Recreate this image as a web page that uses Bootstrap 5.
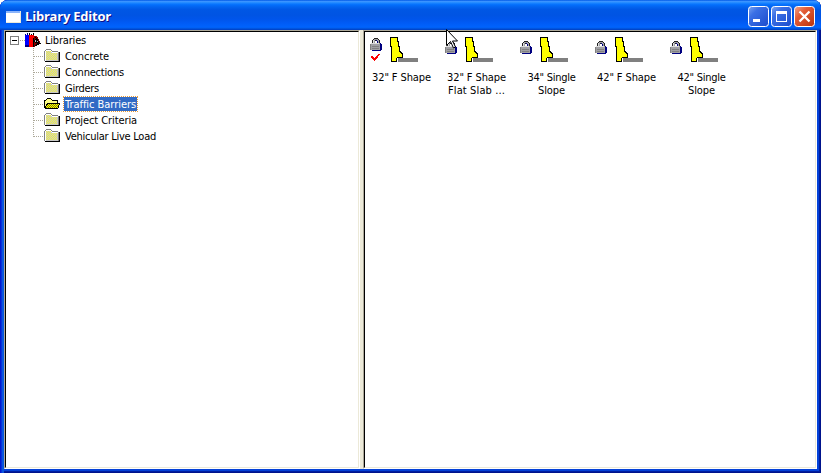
<!DOCTYPE html>
<html lang="en">
<head>
<meta charset="utf-8">
<meta name="viewport" content="width=device-width, initial-scale=1">
<title>Library Editor</title>
<link href="https://cdn.jsdelivr.net/npm/bootstrap@5.3.0/dist/css/bootstrap.min.css" rel="stylesheet">
<style>
body{font:11px/13px "DejaVu Sans Condensed","DejaVu Sans",sans-serif;font-stretch:condensed;color:#000;background:#fff;overflow:hidden}
svg{display:block;flex:none;shape-rendering:crispEdges}
.win{width:821px;height:473px;padding:0 4px 4px;border-radius:8px 8px 0 0;background:#0831d9;
 box-shadow:inset 1px 0 #0019cf,inset 2px 0 #0831d9,inset 4px 0 #0855dd,inset -1px -1px #00138c,inset -2px -2px #001ea0,inset -4px -4px #0441d8}
.titlebar{height:30px;margin:0 -4px;padding:3px 6px 0 6px;border-radius:8px 8px 0 0;
 background:linear-gradient(#0058e6 0,#3a93ff 5%,#288eff 8%,#127dff 12%,#036ffc 16%,#0262ee 24%,#0057e5 32%,#0054e3 50%,#0055eb 64%,#005bf5 76%,#0062fc 88%,#0061f5 92%,#0050d8 96%,#003dc0 100%)}
.caption-text{font:bold 13px/18px "Open Sans","Noto Sans",sans-serif;color:#fff;text-shadow:1px 1px #0f1089;margin:0 auto 0 4px}
.buttons{gap:2px;padding-top:3px}
.panes{height:439px;background:#ece9d8}
.pane{border:solid;border-width:1px;border-color:#aca899 #fff #fff #aca899;background:#fff}
.inner{border:solid;border-width:1px;border-color:#000 #ece9d8 #ece9d8 #000;height:100%;background:#fff}
.tree-pane{width:356px}
.item-pane{width:454px}
.tree-row{height:16px}
.tree-label{height:14px;line-height:13px;padding:1px 1px 0;margin-top:1px;margin-left:4px;white-space:pre}
.root-label{margin-left:0}
.child-row{padding-left:27px}
.dots{width:11px;height:16px;background:repeating-linear-gradient(90deg,#aca899 0 1px,#fff 1px 2px) 1px 8px/10px 1px no-repeat,repeating-linear-gradient(#aca899 0 1px,#fff 1px 2px) 0 0/1px 16px no-repeat}
.child-row:last-child .dots{background-size:10px 1px,1px 9px}
.chosen{background:#316ac5;color:#fff;outline:1px dotted #e79b3a}
.item{width:75px;height:70px}
.item-label{white-space:pre;padding:8px 2px 0 0}
.t{display:block;width:max-content}
.item-label .t{margin:0 auto}
.cursor{left:446px;top:29px;z-index:3}
</style>
</head>
<body>
<svg width="0" height="0" class="position-absolute">
<defs>
<symbol id="folder" viewBox="0 0 16 14">
<path fill="#808080" d="M2 0h5v1h1v1h6v1h1v9H0V2h1V1h1z"/><path fill="#fff" d="M2 1h5v1h1v1h6v9H1V2h1z"/>
<path fill="#c8c8c8" d="M2 2h5v1h1v1h6v8H2z"/>
<path stroke="#f4f43c" stroke-dasharray="1 1" d="M2 2.500h5M3 3.500h4M2 4.500h11M3 5.500h10M2 6.500h11M3 7.500h10M2 8.500h11M3 9.500h10M2 10.500h11"/>
<path fill="#000" d="M15 3h1v10H1v-1h14z"/>
</symbol>
<symbol id="open" viewBox="0 0 16 14">
<path d="M3 1h4v1h1v1h6v3h2v2h-1v3h-1v1H1v-1H0V3h2V2h1z"/><path fill="#ff8" d="M3 2h4v1h1v1h5v2H3v1H2v2H1V4h1V3h1z"/><path fill="#ff0" d="M4 7h11v1h-1v3H2V9h1V8h1z"/>
<path stroke="#808000" stroke-dasharray="1 1" d="M5 7.500h9M4 8.500h10M3 9.500h11M2 10.500h11"/>
</symbol>
<symbol id="lock" viewBox="0 0 12 13">
<path fill="#202020" d="M4 0h4v1h1v1h1v3H2V2h1V1h1z"/>
<path fill="#000080" d="M9 5h2v1h1v6h-1v1H2v-1h7z"/>
<path fill="#a0a0a4" d="M4 1h4v1h1v3H8V3H7V2H5v3H3V2h1zM1 5h9v7H1z"/><path fill="#fff" d="M5 3h2v2H5z"/><path fill="#000080" d="M6 2h1v1H6zM7 3h1v2H7z"/><path fill="#dcdcdc" d="M1 5h8v1H1zM3 2h1v3H3z"/><path fill="#808080" d="M0 6h1v6H0zM2 8h7v1H2zM2 10h7v1H2z"/>
</symbol>
<symbol id="barrier" viewBox="0 0 28 25">
<path fill="#808080" d="M8 21h20v4H8z"/><path d="M0 0h8v4h1v5h1v5h1v1h1v1h1v5H7v4H1V10H0z"/><path fill="#ff0" d="M1 1h6v4h1v5h1v5h1v1h1v1h1v3H7v1H6v3H2V9H1z"/>
</symbol>
</defs>
</svg>
<main class="win position-relative">
<header class="titlebar d-flex align-items-start">
<svg width="15" height="13" class="mt-2"><path fill="#ece9d8" d="M0 0h15v12H0z"/><path fill="#8bb4fa" d="M0 0h14v2H0z"/><path fill="#fff" d="M0 2h14v9H0z"/></svg>
<div class="caption-text pt-1"><span class="t" data-w="86">Library Editor</span></div>
<div class="buttons d-flex">
<svg width="21" height="21"><defs><linearGradient id="b" x2="1" y2="1"><stop stop-color="#7ca5f0"/><stop offset=".3" stop-color="#3b70e5"/><stop offset="1" stop-color="#1b4bcc"/></linearGradient><linearGradient id="r" x2="1" y2="1"><stop stop-color="#f0a58c"/><stop offset=".35" stop-color="#e35c36"/><stop offset="1" stop-color="#b8320c"/></linearGradient></defs><rect x=".5" y=".5" width="20" height="20" rx="3" fill="url(#b)" stroke="#fff" shape-rendering="auto"/><path fill="#fff" d="M5 13h7v3H5z"/></svg>
<svg width="21" height="21"><rect x=".5" y=".5" width="20" height="20" rx="3" fill="url(#b)" stroke="#fff" shape-rendering="auto"/><path fill="#fff" fill-rule="evenodd" d="M5 5h11v11H5zM6 8v7h9V8z"/></svg>
<svg width="21" height="21"><rect x=".5" y=".5" width="20" height="20" rx="3" fill="url(#r)" stroke="#fff" shape-rendering="auto"/><path stroke="#fff" stroke-width="2.3" shape-rendering="auto" d="M5.500 5.500l10 10M15.500 5.500l-10 10"/></svg>
</div>
</header>
<div class="panes d-flex justify-content-between">
<section class="pane tree-pane"><div class="inner">
<div class="tree-row d-flex">
<svg width="38" height="18"><path fill="#808080" fill-rule="evenodd" d="M4 4h9v9H4zM5 5v7h7V5z"/><path d="M6 8h5v1H6z"/><path stroke="#aca899" stroke-dasharray="1 1" d="M14 8.500h5"/>
<path fill="#00f" d="M19 3h4v12h-4z"/><path fill="#000080" d="M19 2h1v1h-1zM21 1h1v2h-1zM19 13h4v2h-4z"/><path fill="red" d="M23 3h5v12h-5z"/><path d="M23 1h1v2h-1zM25 2h1v1h-1zM27 1h1v2h-1z"/><path fill="#800000" d="M28 4h3v1h1v2h1v2h1v2h1v1h-2v1h-2v1h-2v1h-1z"/><path d="M27 6h1v9h-1zM29 5h1v1h-1zM30 6h1v1h-1zM31 7h1v2h1v2h2v1h-2v1h-2v1h-2v-1h1v-1h1v-1h-2v-1h-1V8h1V7h2z"/><path fill="#c0c0c0" d="M29 8h1v2h-1zM31 9h1v1h-1z"/></svg>
<span class="tree-label root-label"><span class="t" data-w="41">Libraries</span></span></div>
<div class="tree-row child-row d-flex"><i class="dots"></i><svg width="16" height="15"><use href="#folder" y="1" height="14"/></svg><span class="tree-label"><span class="t" data-w="44">Concrete</span></span></div>
<div class="tree-row child-row d-flex"><i class="dots"></i><svg width="16" height="15"><use href="#folder" y="1" height="14"/></svg><span class="tree-label"><span class="t" data-w="59">Connections</span></span></div>
<div class="tree-row child-row d-flex"><i class="dots"></i><svg width="16" height="15"><use href="#folder" y="1" height="14"/></svg><span class="tree-label"><span class="t" data-w="34">Girders</span></span></div>
<div class="tree-row child-row d-flex"><i class="dots"></i><svg width="16" height="15"><use href="#open" y="1" height="14"/></svg><span class="tree-label chosen"><span class="t" data-w="71">Traffic Barriers</span></span></div>
<div class="tree-row child-row d-flex"><i class="dots"></i><svg width="16" height="15"><use href="#folder" y="1" height="14"/></svg><span class="tree-label"><span class="t" data-w="72">Project Criteria</span></span></div>
<div class="tree-row child-row d-flex"><i class="dots"></i><svg width="16" height="15"><use href="#folder" y="1" height="14"/></svg><span class="tree-label"><span class="t" data-w="91">Vehicular Live Load</span></span></div>
</div></section>
<section class="pane item-pane"><div class="inner d-flex align-items-start">
<div class="item"><svg width="75" height="31"><use href="#lock" x="5" y="6" width="12" height="13"/><path fill="red" d="M6 24h2v1h1v1h1v-1h1v-1h1v-1h1v-1h2v1h-1v1h-1v2h-1v1h-1v1h-1v1H9v-1H8v-1H7v-1H6z"/><use href="#barrier" x="25" y="5" width="28" height="25"/></svg><div class="item-label"><span class="t" data-w="59">32" F Shape</span></div></div>
<div class="item"><svg width="75" height="31"><use href="#lock" x="5" y="9" width="12" height="13"/><use href="#barrier" x="25" y="5" width="28" height="25"/></svg><div class="item-label"><span class="t" data-w="59">32" F Shape</span><span class="t" data-w="57">Flat Slab ...</span></div></div>
<div class="item"><svg width="75" height="31"><use href="#lock" x="5" y="9" width="12" height="13"/><use href="#barrier" x="25" y="5" width="28" height="25"/></svg><div class="item-label"><span class="t" data-w="48">34" Single</span><span class="t" data-w="27">Slope</span></div></div>
<div class="item"><svg width="75" height="31"><use href="#lock" x="5" y="9" width="12" height="13"/><use href="#barrier" x="25" y="5" width="28" height="25"/></svg><div class="item-label"><span class="t" data-w="59">42" F Shape</span></div></div>
<div class="item"><svg width="75" height="31"><use href="#lock" x="5" y="9" width="12" height="13"/><use href="#barrier" x="25" y="5" width="28" height="25"/></svg><div class="item-label"><span class="t" data-w="48">42" Single</span><span class="t" data-w="27">Slope</span></div></div>
</div></section>
</div>
<svg class="cursor position-absolute" width="13" height="20"><path shape-rendering="auto" fill="#fff" stroke="#000" d="M.5.5v16l4-4 3 6.500 2-1-3-6h5z"/></svg>
</main>
<script src="https://cdn.jsdelivr.net/npm/bootstrap@5.3.0/dist/js/bootstrap.bundle.min.js"></script>
<script>
// Track each label so that it fills its nominal caption width
document.querySelectorAll('.t').forEach(function (el) {
  var gap = (el.dataset.w - el.getBoundingClientRect().width) / el.textContent.length;
  el.style.letterSpacing = gap + 'px';
});
</script>
</body>
</html>
